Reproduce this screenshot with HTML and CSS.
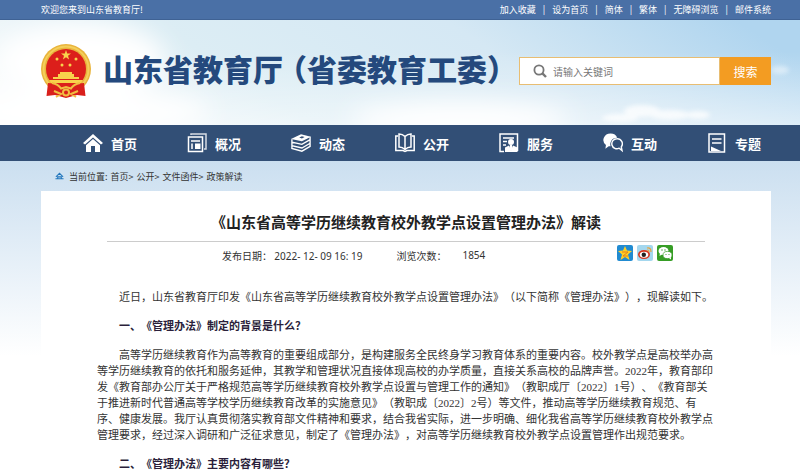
FILE: index.html
```html
<!DOCTYPE html>
<html lang="zh-CN">
<head>
  <meta charset="UTF-8">
  <meta name="viewport" content="width=device-width, initial-scale=1">
  <title>《山东省高等学历继续教育校外教学点设置管理办法》解读</title>
  <link rel="stylesheet" href="styles.css">
</head>
<body>
  <div class="topbar">
    <span>欢迎您来到山东省教育厅!</span>
    <ul class="toplinks">
      <li><a href="#">加入收藏</a></li>
      <li><a href="#">设为首页</a></li>
      <li><a href="#">简体</a></li>
      <li><a href="#">繁体</a></li>
      <li><a href="#">无障碍浏览</a></li>
      <li><a href="#">邮件系统</a></li>
    </ul>
  </div>

  <header class="banner">
    <svg class="sky" viewBox="0 0 800 105" preserveAspectRatio="none" aria-hidden="true">
      <defs>
        <linearGradient id="skyBlue" x1="0" y1="0.6" x2="1" y2="0.4">
          <stop offset="0" stop-color="#f6fafb"/>
          <stop offset="0.3" stop-color="#dcedf4"/>
          <stop offset="0.65" stop-color="#d5e8f4"/>
          <stop offset="1" stop-color="#b0d5ef"/>
        </linearGradient>
        <linearGradient id="skyFade" x1="0" y1="0" x2="0" y2="1">
          <stop offset="0.3" stop-color="#fff" stop-opacity="0"/>
          <stop offset="1" stop-color="#fff" stop-opacity="0.5"/>
        </linearGradient>
        <filter id="soft" x="-30%" y="-60%" width="160%" height="220%"><feGaussianBlur stdDeviation="12"/></filter>
        <filter id="puff" x="-20%" y="-50%" width="140%" height="200%"><feGaussianBlur stdDeviation="2"/></filter>
      </defs>
      <rect width="800" height="105" fill="url(#skyBlue)"/>
      <rect width="800" height="105" fill="url(#skyFade)"/>
      <g fill="#fff" filter="url(#soft)">
        <ellipse cx="80" cy="40" rx="85" ry="38"/>
        <ellipse cx="70" cy="92" rx="140" ry="22"/>
        <ellipse cx="460" cy="100" rx="110" ry="18"/>
      </g>
      <g fill="#fff" filter="url(#puff)" opacity="0.75">
        <ellipse cx="642" cy="91" rx="18" ry="6"/>
        <ellipse cx="670" cy="95" rx="20" ry="5"/>
        <ellipse cx="698" cy="95" rx="12" ry="4"/>
        <ellipse cx="620" cy="98" rx="18" ry="4"/>
        <ellipse cx="780" cy="50" rx="9" ry="4" opacity="0.6"/>
      </g>
    </svg>
    <a class="brand" href="#">
      <svg class="emblem" viewBox="0 0 50 54" aria-hidden="true">
        <circle cx="25" cy="25" r="25" fill="#e9b43c"/>
        <circle cx="25" cy="25" r="22.500" fill="none" stroke="#f4cf5b" stroke-width="2"/>
        <circle cx="25" cy="25" r="20" fill="#dc1f1b"/>
        <g fill="#f8d34c">
          <path d="M25 6l1.200 3.500H30l-3 2.300 1.100 3.700L25 13.300l-3.100 2.200L23 11.800l-3-2.300h3.800z"/>
          <circle cx="16" cy="15" r="1.500"/><circle cx="35" cy="15" r="1.500"/>
          <circle cx="21" cy="21" r="1.500"/><circle cx="29" cy="21" r="1.500"/>
          <path d="M19 28h12v2h2v3h5v2H12v-2h5v-3h2z"/>
          <path d="M8 36h34l-2 3H10z"/>
        </g>
        <path d="M7 39q6 0 10 3.500h16Q37 39 43 39l1.500 13-8.500-1-11 3-11-3-8.500 1z" fill="#d9201c"/>
        <path d="M11 39q6 1 9 5.500l5-1.500 5 1.500q3-4.500 9-5.500M13 47l7 3-5 3M37 47l-7 3 5 3" fill="none" stroke="#f1be42" stroke-width="2"/>
        <circle cx="25" cy="48.500" r="3" fill="#d9201c" stroke="#f1be42" stroke-width="2"/>
      </svg>
      <span class="brand-name">山东省教育厅<span class="brand-sub">（省委教育工委）</span></span>
    </a>
    <form class="search" onsubmit="return false">
      <label class="search-field">
        <svg viewBox="0 0 14 14" aria-hidden="true"><circle cx="6" cy="6" r="4.6" fill="none" stroke="#777" stroke-width="1.8"/><path d="M9.4 9.4L13 13" stroke="#777" stroke-width="2.4"/></svg>
        <input type="text" placeholder="请输入关键词" aria-label="请输入关键词">
      </label>
      <button type="submit">搜索</button>
    </form>
  </header>

  <nav class="mainnav">
    <ul>
      <li><a href="#">
        <svg viewBox="0 0 20 20"><path d="M10 1L20 10l-2 1.600L10 4.500 2 11.600 0 10z"/><path d="M10 6l7 6.200V19h-5v-6H8v6H3v-6.800z"/></svg>
        首页</a></li>
      <li><a href="#">
        <svg viewBox="0 0 20 20"><g class="line"><path d="M4 2V1h15v15h-2" opacity=".8"/><path d="M1.500 4h14v14.500h-14z"/><path d="M4 8h9M5 10.500V16"/></g><path d="M8 10.500h5.500V16H8z"/></svg>
        概况</a></li>
      <li><a href="#">
        <svg viewBox="0 0 22 20"><path fill-rule="evenodd" d="M0 5.500L11 .5 22 3 12 8zM9 4l3 1 3-1.500-3-1z"/><g class="line"><path d="M1 6v3l11 2.500L21.500 6M1 9.500V13l11 2.500 9.500-5.500M1 13.500V16l11 3 9.500-5.500M21 3v11"/></g></svg>
        动态</a></li>
      <li><a href="#">
        <svg viewBox="0 0 20 20"><g class="line"><path d="M10 3.500Q7.500 1 4 1v13q3.500 0 6 2.500 2.500-2.500 6-2.500V1q-3.500 0-6 2.500zM10 3.500v13"/><path d="M3 3H.8v14.500H8l2 1 2-1h7.200V3H17"/></g></svg>
        公开</a></li>
      <li><a href="#">
        <svg viewBox="0 0 20 20"><g class="line"><path d="M5 18.500H1V1h17.500v17M4 5h11M4 8.500h4M4 12h3"/></g><circle cx="12" cy="9" r="3"/><path d="M6 19v-4.500l4-2 2 5 2-5 4.500 2V19z"/><path d="M11 12h2l.8 4-1.800 2-1.800-2z"/></svg>
        服务</a></li>
      <li><a href="#">
        <svg viewBox="0 0 21 20"><path d="M8 0a7.500 6.800 0 0 1 7 4.500A6.800 6.800 0 0 0 8 13.500H6L2.500 16l.6-4A7.500 6.800 0 0 1 8 0z"/><g class="line"><path d="M14.500 5.500a5.300 5.300 0 1 0 2.500 10l3 2.500-.8-4a5.300 5.300 0 0 0-4.700-8.500z"/></g></svg>
        互动</a></li>
      <li><a href="#">
        <svg viewBox="0 0 20 20"><g class="line"><path d="M2 1h15.500v18H2zM5 6h9.500M5 10h9.500"/></g><path d="M4 13.500L14 18H4z"/></svg>
        专题</a></li>
    </ul>
  </nav>

  <div class="page">
    <div class="crumbs">
      <svg viewBox="0 0 10 8" aria-hidden="true"><path d="M1 5l4-4 4 4M.5 7h9M3 7V5h4v2" fill="none" stroke="#2377bd" stroke-width="1.200"/></svg>
      <span>当前位置:</span>
      <a href="#">首页&gt;</a>
      <a href="#">公开&gt;</a>
      <a href="#">文件函件&gt;</a>
      <a href="#">政策解读</a>
    </div>

    <main class="card">
      <div class="head">
        <h1>《山东省高等学历继续教育校外教学点设置管理办法》解读</h1>
        <div class="meta">
          <span class="date">发布日期： <span class="num">2022- 12- 09 16: 19</span></span>
          <span>浏览次数：</span>
          <span class="num views">1854</span>
          <div class="share">
            <a href="#" aria-label="QQ空间"><svg viewBox="0 0 16 16"><rect width="16" height="16" rx="2" fill="#218bd1"/><path d="M8 1l2 4.500 5 .5-4 3.500L12.500 15 8 12l-4.500 3L5 9.500 1 6l5-.5z" fill="#ffcf25"/><path d="M5 7h6l-5 4h5" fill="none" stroke="#e5801a"/></svg></a>
            <a href="#" aria-label="新浪微博"><svg viewBox="0 0 16 16"><rect width="16" height="16" rx="2" fill="#a4d7ee"/><ellipse cx="7" cy="9.500" rx="6" ry="4.500" fill="#d8371f"/><ellipse cx="7" cy="9.800" rx="4.300" ry="3" fill="#fff"/><circle cx="6.800" cy="9.800" r="2.200" fill="#222"/><path d="M10 3q4-1 4 4M10 5q2 0 2 2" fill="none" stroke="#eba43b" stroke-width="1.200"/></svg></a>
            <a href="#" aria-label="微信"><svg viewBox="0 0 16 16"><rect width="16" height="16" rx="2" fill="#369d25"/><path d="M3 8l-.5 3 2.500-1.500z" fill="#fff"/><ellipse cx="6.500" cy="6" rx="5" ry="4" fill="#fff"/><ellipse cx="10.500" cy="10" rx="4.500" ry="3.600" fill="#fff" stroke="#369d25" stroke-width=".7"/><path d="M12 13l2 1.500V12z" fill="#fff"/><g fill="#369d25"><circle cx="5" cy="5" r=".7"/><circle cx="8" cy="5" r=".7"/><circle cx="9" cy="9.500" r=".6"/><circle cx="12" cy="9.500" r=".6"/></g></svg></a>
          </div>
        </div>
      </div>

      <article class="content">
        <p>近日，山东省教育厅印发《山东省高等学历继续教育校外教学点设置管理办法》（以下简称《管理办法》），现解读如下。</p>
        <h2>一、《管理办法》制定的背景是什么？</h2>
        <p>高等学历继续教育作为高等教育的重要组成部分，是构建服务全民终身学习教育体系的重要内容。校外教学点是高校举办高等学历继续教育的依托和服务延伸，其教学和管理状况直接体现高校的办学质量，直接关系高校的品牌声誉。2022年，教育部印发《教育部办公厅关于严格规范高等学历继续教育校外教学点设置与管理工作的通知》（教职成厅〔2022〕1号）、《教育部关于推进新时代普通高等学校学历继续教育改革的实施意见》（教职成〔2022〕2号）等文件，推动高等学历继续教育规范、有序、健康发展。我厅认真贯彻落实教育部文件精神和要求，结合我省实际，进一步明确、细化我省高等学历继续教育校外教学点管理要求，经过深入调研和广泛征求意见，制定了《管理办法》，对高等学历继续教育校外教学点设置管理作出规范要求。</p>
        <h2>二、《管理办法》主要内容有哪些？</h2>
      </article>
    </main>
  </div>
</body>
</html>
```
FILE: styles.css
```css
* {
  box-sizing: border-box;
}
body {
  margin: 0;
  font-family: "Noto Sans CJK SC", sans-serif;
  font-size: 9px;
  color: #333;
  background: #fff linear-gradient(#cbdff0 161px, #fff 356px) no-repeat;
}
a {
  color: inherit;
  text-decoration: none;
}
ul {
  list-style: none;
  margin: 0;
  padding: 0;
}

/* top bar */
.topbar {
  display: flex;
  justify-content: space-between;
  height: 20px;
  line-height: 19px;
  padding: 0 29px 0 41px;
  color: #fff;
  background: #4a70a6;
  border-bottom: 1px solid #3f6294;
}
.toplinks {
  display: flex;
}
.toplinks li + li::before {
  content: "|";
  margin: 0 7px;
}

/* banner */
.banner {
  position: relative;
  display: flex;
  justify-content: space-between;
  align-items: center;
  height: 105px;
  padding: 0 29px 0 41px;
}
.sky {
  position: absolute;
  inset: 0;
  width: 100%;
  height: 100%;
}
.brand {
  position: relative;
  display: flex;
  align-items: center;
  gap: 12px;
  margin-top: -4px;
  white-space: nowrap;
}
.emblem {
  width: 50px;
  height: 54px;
}
.brand-name {
  padding-bottom: 6px;
  font-size: 30px;
  line-height: 40px;
  font-weight: 900;
  color: #24497d;
}
.brand-sub {
  margin-left: -6px;
}
.search {
  position: relative;
  display: flex;
  width: 252px;
  height: 28px;
  margin-top: -3px;
  flex-shrink: 0;
}
.search-field {
  display: flex;
  flex: 1;
  align-items: center;
  gap: 6px;
  padding-left: 13px;
  background: #fff;
  border: 1px solid #e8bd72;
}
.search-field svg {
  width: 14px;
  height: 14px;
}
.search input {
  flex: 1;
  min-width: 0;
  padding: 0;
  border: 0;
  outline: 0;
  font: inherit;
  font-size: 10px;
}
.search input::placeholder {
  color: #777;
}
.search button {
  width: 51px;
  padding: 0;
  border: 0;
  font: inherit;
  font-size: 12px;
  color: #fff;
  background: #f39c22;
}

/* navigation */
.mainnav {
  height: 36px;
  padding: 0 14px 0 58px;
  background: #324f76;
}
.mainnav ul {
  display: grid;
  grid-template-columns: repeat(7, 1fr);
}
.mainnav a {
  display: flex;
  justify-content: center;
  align-items: center;
  gap: 8px;
  height: 36px;
  font-size: 13px;
  font-weight: bold;
  color: #fff;
}
.mainnav svg {
  width: 20px;
  height: 20px;
  fill: #fff;
}
.mainnav .line {
  fill: none;
  stroke: #fff;
  stroke-width: 1.5;
}

/* page */
.page {
  margin: 0 29px 0 41px;
}
.crumbs {
  display: flex;
  align-items: center;
  gap: 3px;
  height: 30px;
  padding-left: 14px;
}
.crumbs svg {
  width: 9px;
  height: 8px;
  margin-right: 2px;
}
.card {
  background: #fff;
  padding-top: 20px;
}
.head {
  margin: 0 66px;
}
h1 {
  margin: 0;
  padding-bottom: 9px;
  font-size: 15px;
  line-height: 21px;
  text-align: center;
  white-space: nowrap;
  border-bottom: 1px solid #ccc;
  color: #222;
}
.meta {
  display: flex;
  align-items: center;
  height: 26px;
  padding: 0 32px 0 115px;
  font-size: 10px;
}
.num {
  font-family: "Noto Sans", sans-serif;
}
.date {
  margin-right: 34px;
}
.views {
  margin-left: 16px;
}
.share {
  display: flex;
  gap: 4px;
  margin-left: auto;
  margin-bottom: 4px;
}
.share svg {
  display: block;
  width: 16px;
  height: 16px;
}

/* article */
.content {
  margin: 0 56px;
  font-family: "Liberation Serif", "Noto Sans CJK SC", sans-serif;
  font-size: 11px;
  line-height: 16px;
  text-spacing-trim: space-all;
}
.content p,
.content h2 {
  margin: 0 0 13px;
  text-indent: 2em;
}
.content p:first-child {
  margin-top: 21px;
}
.content h2 {
  font-size: 11px;
  color: #2b1f3b;
}
```
